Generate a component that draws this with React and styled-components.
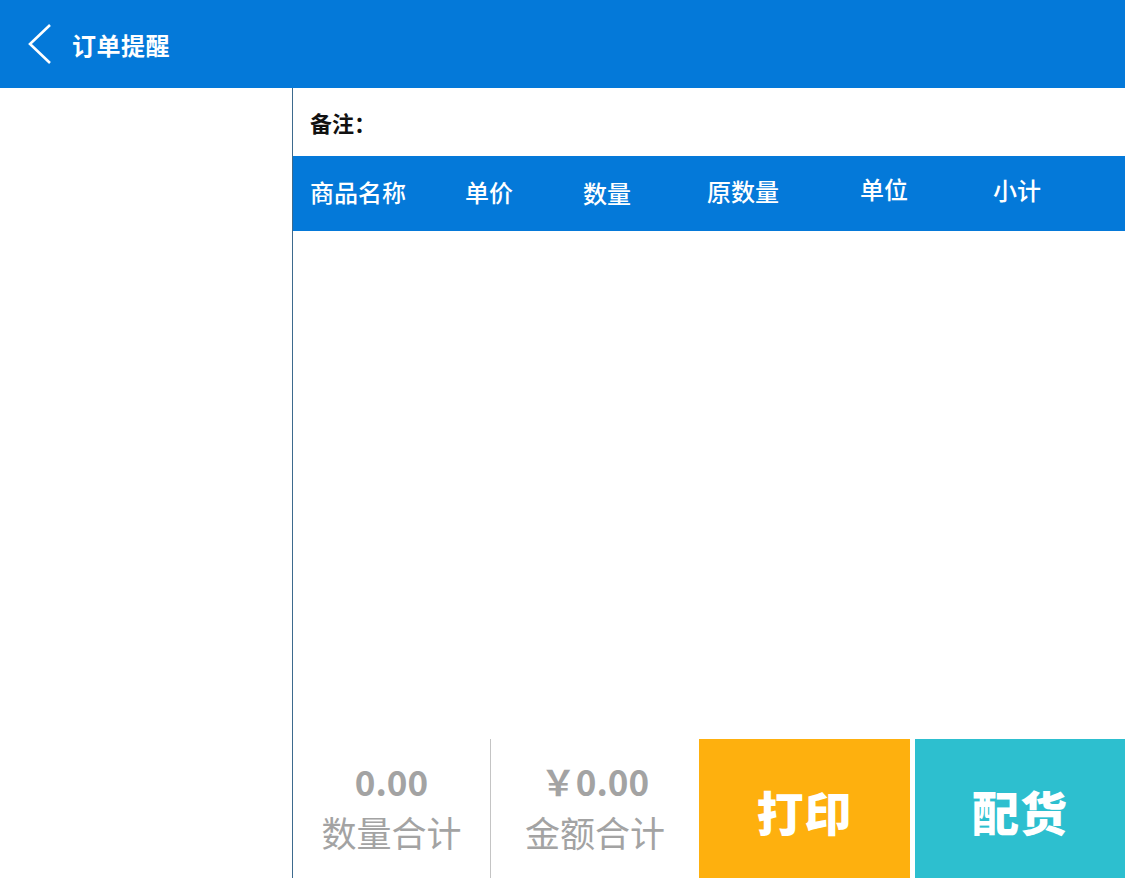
import styled, { createGlobalStyle } from "styled-components";

const GlobalStyle = createGlobalStyle`
  html, body {
    margin: 0;
    padding: 0;
    background: #ffffff;
    font-family: "Noto Sans CJK SC", "Noto Sans", sans-serif;
  }
`;

const Page = styled.div`
  display: flex;
  flex-direction: column;
  height: 878px;
  overflow: hidden;
`;

const Header = styled.header`
  height: 88px;
  flex-shrink: 0;
  background: #0479d9;
  display: flex;
  align-items: center;
  padding-left: 26px;
  color: #fff;
`;

const BackButton = styled.div`
  width: 28px;
  height: 42px;
  display: flex;
  align-items: center;
  margin-right: 18px;
`;

const Title = styled.h1`
  margin: 0;
  font-size: 24px;
  font-weight: 700;
  letter-spacing: 0.5px;
`;

const Main = styled.div`
  flex: 1;
  display: flex;
  min-height: 0;
`;

const Sidebar = styled.aside`
  width: 293px;
  flex-shrink: 0;
  border-right: 1px solid #3d6a8e;
  box-sizing: border-box;
  background: #fff;
`;

const Detail = styled.section`
  flex: 1;
  display: flex;
  flex-direction: column;
  min-width: 0;
`;

const NoteRow = styled.div`
  height: 68px;
  flex-shrink: 0;
  display: flex;
  align-items: center;
  padding-left: 17px;
  font-size: 22px;
  font-weight: 700;
  color: #111;
`;

const TableHead = styled.div`
  height: 75px;
  flex-shrink: 0;
  background: #0479d9;
  display: flex;
  align-items: center;
  padding: 0 0 4px 17px;
  box-sizing: border-box;
`;

const HeadCell = styled.div`
  width: ${(p) => p.$w}px;
  flex-shrink: 0;
  color: #fff;
  font-size: 24px;
  font-weight: 500;
  white-space: nowrap;
  transform: translateY(${(p) => p.$dy || 0}px);
`;

const TableBody = styled.div`
  flex: 1;
`;

const Footer = styled.div`
  height: 139px;
  flex-shrink: 0;
  display: flex;
`;

const Stat = styled.div`
  width: ${(p) => p.$w}px;
  flex-shrink: 0;
  display: flex;
  flex-direction: column;
  align-items: center;
  justify-content: center;
  border-right: ${(p) => (p.$divider ? "1px solid #c4c4c4" : "none")};
  box-sizing: border-box;
  padding-bottom: 4px;
  color: #a3a3a3;
`;

const StatValue = styled.div`
  font-size: 35px;
  font-weight: 700;
  line-height: 44px;
`;

const StatLabel = styled.div`
  font-size: 35px;
  font-weight: 400;
  line-height: 46px;
  margin-top: 6px;
`;

const ActionButton = styled.button`
  width: ${(p) => p.$w}px;
  flex-shrink: 0;
  margin-left: ${(p) => p.$gap || 0}px;
  border: none;
  background: ${(p) => p.$bg};
  color: #fff;
  font-family: inherit;
  font-size: 47px;
  font-weight: 900;
  letter-spacing: 1px;
  padding: 4px 0 0;
  cursor: pointer;
`;

const columns = [
  { label: "商品名称", w: 155, dy: 0 },
  { label: "单价", w: 118, dy: 0 },
  { label: "数量", w: 124, dy: 1 },
  { label: "原数量", w: 153, dy: -1 },
  { label: "单位", w: 133, dy: -3 },
  { label: "小计", w: 100, dy: -2 },
];

function App() {
  return (
    <Page>
      <GlobalStyle />
      <Header>
        <BackButton>
          <svg width="26" height="42" viewBox="0 0 26 42">
            <polyline
              points="24,2 4,21 24,40"
              fill="none"
              stroke="#fff"
              strokeWidth="2.6"
            />
          </svg>
        </BackButton>
        <Title>订单提醒</Title>
      </Header>
      <Main>
        <Sidebar />
        <Detail>
          <NoteRow>备注：</NoteRow>
          <TableHead>
            {columns.map((c) => (
              <HeadCell key={c.label} $w={c.w} $dy={c.dy}>
                {c.label}
              </HeadCell>
            ))}
          </TableHead>
          <TableBody />
          <Footer>
            <Stat $w={198} $divider>
              <StatValue>0.00</StatValue>
              <StatLabel>数量合计</StatLabel>
            </Stat>
            <Stat $w={208}>
              <StatValue>￥0.00</StatValue>
              <StatLabel>金额合计</StatLabel>
            </Stat>
            <ActionButton $w={211} $bg="#feb00e">打印</ActionButton>
            <ActionButton $w={210} $gap={5} $bg="#2dbfcf">配货</ActionButton>
          </Footer>
        </Detail>
      </Main>
    </Page>
  );
}

export default App;
